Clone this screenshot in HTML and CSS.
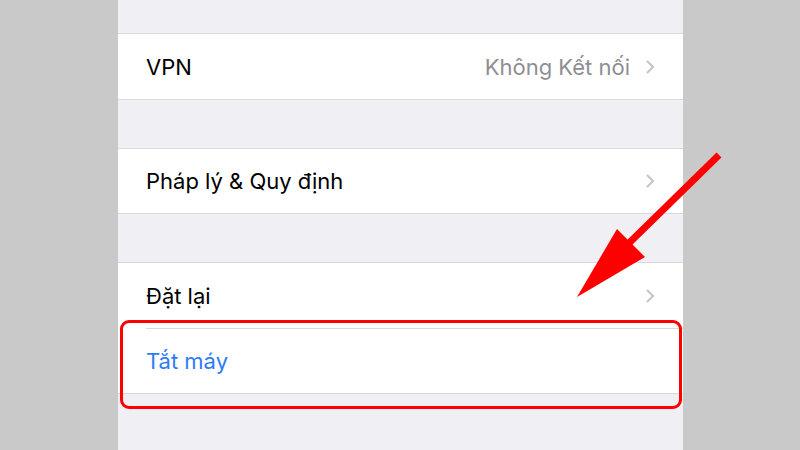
FILE: index.html
```html
<!DOCTYPE html>
<html lang="vi">
<head>
  <meta charset="UTF-8" />
  <meta name="viewport" content="width=device-width, initial-scale=1.0">
  <title>Cài đặt chung</title>
  <link rel="stylesheet" href="styles.css">
</head>
<body>
  <div class="screen">
    <div class="spacer top"></div>

    <div class="group">
      <div class="row">
        <span class="label">VPN</span>
        <span class="value">Không Kết nối</span>
        <svg class="chevron" viewBox="0 0 10 16"><path d="M2 2 L8 8 L2 14" /></svg>
      </div>
    </div>

    <div class="spacer"></div>

    <div class="group">
      <div class="row short">
        <span class="label">Pháp lý &amp; Quy định</span>
        <svg class="chevron" viewBox="0 0 10 16"><path d="M2 2 L8 8 L2 14" /></svg>
      </div>
    </div>

    <div class="spacer"></div>

    <div class="group">
      <div class="row">
        <span class="label">Đặt lại</span>
        <svg class="chevron" viewBox="0 0 10 16"><path d="M2 2 L8 8 L2 14" /></svg>
      </div>
      <div class="row inset">
        <span class="label action">Tắt máy</span>
      </div>
    </div>

    <div class="spacer bottom"></div>

    <div class="highlight"></div>
    <svg class="arrow" viewBox="0 0 800 450">
      <line x1="719" y1="155" x2="625" y2="247" />
      <polygon points="577,297 617,229 645,257" />
    </svg>
  </div>
</body>
</html>
```

FILE: styles.css
```css
:root {
  --side: #c9c9c9;
  --bg: #efeff4;
  --line: #d9d9dd;
  --text: #000000;
  --muted: #8e8e93;
  --chevron: #c4c4c8;
  --blue: #2d7cf6;
  --red: #ff0000;
}

* {
  margin: 0;
  padding: 0;
  box-sizing: border-box;
}

body {
  background: var(--side);
  font-family: 'Inter', 'Noto Sans', sans-serif;
  width: 800px;
  height: 450px;
  overflow: hidden;
}

.screen {
  width: 565px;
  height: 450px;
  margin-left: 118px;
  background: var(--bg);
}

.spacer {
  height: 48px;
}

.spacer.top {
  height: 33px;
}

.group {
  background: #fff;
  border-top: 1px solid var(--line);
  border-bottom: 1px solid var(--line);
}

.row {
  height: 65px;
  display: flex;
  align-items: center;
  padding: 0 28px 0 28px;
}

.row.short {
  height: 64px;
}

.row.inset {
  margin-left: 28px;
  padding-left: 0;
  border-top: 1px solid var(--line);
}

.label {
  font-size: 22px;
  color: var(--text);
  flex: 1;
}

.label.action {
  color: var(--blue);
}

.value {
  font-size: 22px;
  color: var(--muted);
  margin-right: 15px;
}

.chevron {
  width: 10px;
  height: 16px;
}

.chevron path {
  fill: none;
  stroke: var(--chevron);
  stroke-width: 2;
}

.highlight {
  position: absolute;
  left: 120px;
  top: 320px;
  width: 562px;
  height: 89px;
  border: 3px solid var(--red);
  border-radius: 9px;
}

.arrow {
  position: absolute;
  left: 0;
  top: 0;
  width: 800px;
  height: 450px;
}

.arrow line {
  stroke: var(--red);
  stroke-width: 7;
}

.arrow polygon {
  fill: var(--red);
}
```
